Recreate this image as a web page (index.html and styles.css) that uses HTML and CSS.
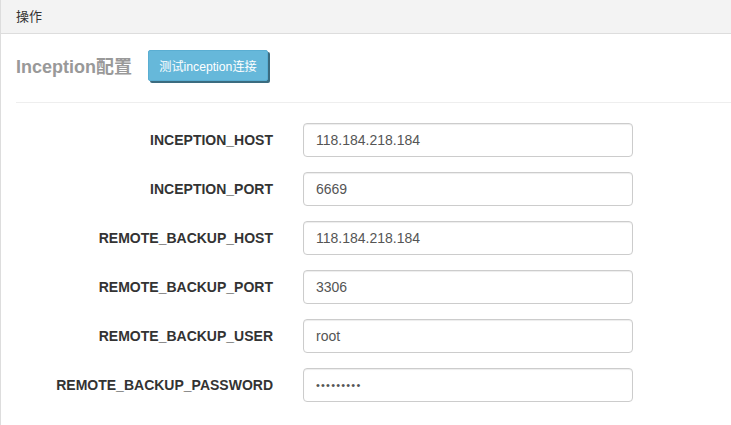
FILE: index.html
```html
<!DOCTYPE html>
<html>
<head>
<meta charset="utf-8">
<link rel="stylesheet" href="styles.css">
</head>
<body>
<div class="panel">
  <div class="panel-heading">操作</div>
  <div class="panel-body">
    <div class="title-row">
      <h3 class="title">Inception配置</h3>
      <button class="btn-info">测试inception连接</button>
    </div>
    <hr class="divider">
    <form class="form">
      <label class="label">INCEPTION_HOST</label>
      <input class="input" type="text" value="118.184.218.184">
      <label class="label">INCEPTION_PORT</label>
      <input class="input" type="text" value="6669">
      <label class="label">REMOTE_BACKUP_HOST</label>
      <input class="input" type="text" value="118.184.218.184">
      <label class="label">REMOTE_BACKUP_PORT</label>
      <input class="input" type="text" value="3306">
      <label class="label">REMOTE_BACKUP_USER</label>
      <input class="input" type="text" value="root">
      <label class="label">REMOTE_BACKUP_PASSWORD</label>
      <input class="input pw" type="password" value="123456789">
    </form>
  </div>
</div>
</body>
</html>
```

FILE: styles.css
```css
html, body {
  margin: 0;
  padding: 0;
  background: #fff;
}
body {
  font-family: "Liberation Sans", Arial, "Noto Sans CJK SC", sans-serif;
  font-size: 13px;
  color: #333;
}
.panel {
  border-left: 1px solid #ddd;
  min-height: 425px;
  box-sizing: border-box;
}
.panel-heading {
  height: 34px;
  box-sizing: border-box;
  background: #f3f3f3;
  border-bottom: 1px solid #ddd;
  padding: 0 15px;
  display: flex;
  align-items: center;
  font-size: 13px;
  color: #333;
  padding-bottom: 2px;
}
.panel-body {
  padding: 15px 0 0 15px;
}
.title-row {
  display: flex;
  align-items: center;
  height: 33px;
}
.title {
  margin: 0;
  font-size: 18px;
  font-weight: bold;
  color: #999;
  margin-right: 16px;
  margin-top: -2px;
}
.btn-info {
  font-family: "Liberation Sans", Arial, "Noto Sans CJK SC", sans-serif;
  font-size: 12.2px;
  color: #fff;
  background: #66b8da;
  border: 1px solid #5aaed2;
  border-radius: 2px;
  height: 31px;
  width: 120px;
  padding: 0;
  box-shadow: 2px 2px 0 #3b6c80;
}
.divider {
  margin: 20px 0 20px 0;
  border: 0;
  border-top: 1px solid #eee;
  height: 0;
}
.form {
  display: grid;
  grid-template-columns: 257px 330px;
  column-gap: 30px;
  row-gap: 15px;
  align-items: center;
}
.label {
  text-align: right;
  font-weight: bold;
  font-size: 14px;
  color: #333;
}
.input {
  box-sizing: border-box;
  height: 34px;
  width: 330px;
  border: 1px solid #ccc;
  border-radius: 4px;
  padding: 0 12px;
  font-family: "Liberation Sans", Arial, sans-serif;
  font-size: 14px;
  color: #555;
  box-shadow: inset 0 1px 1px rgba(0,0,0,.075);
  margin: 0;
}
.pw {
  font-size: 11px;
  letter-spacing: 1.2px;
}
```
